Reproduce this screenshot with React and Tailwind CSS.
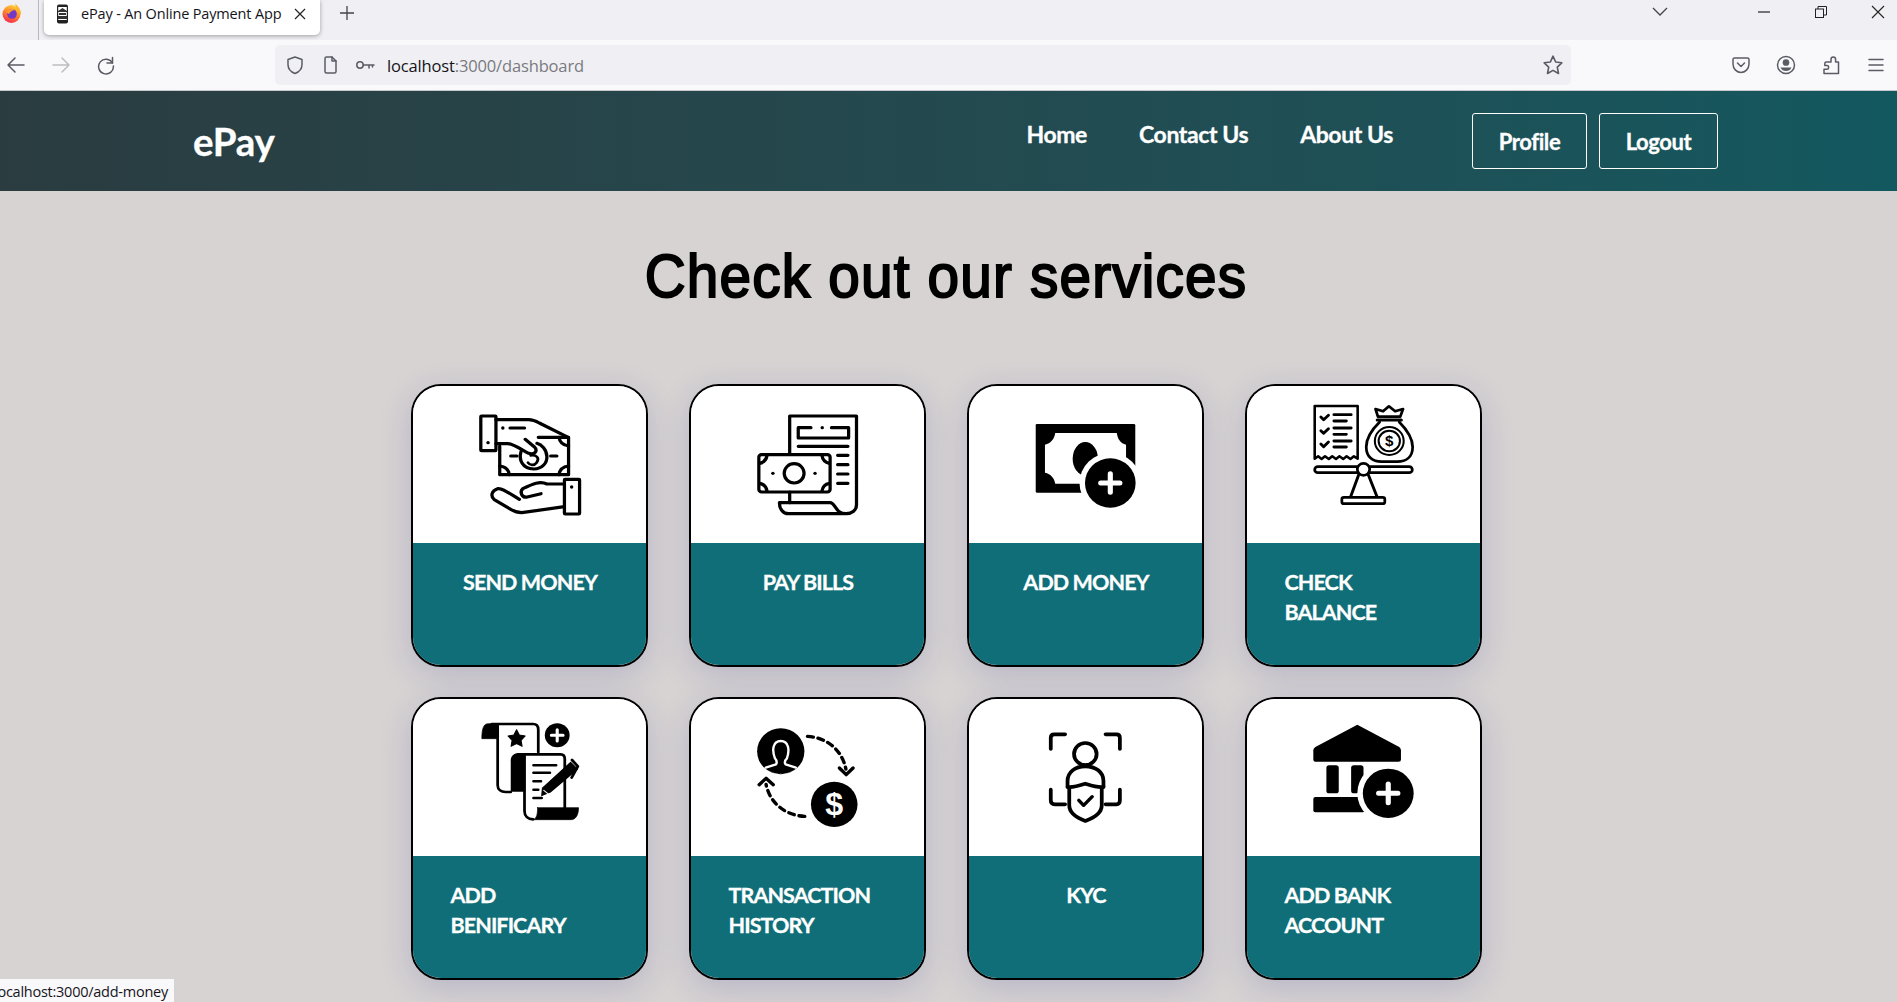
import React from "react";

const Ico = ({ vb, children, className = "" }) => (
  <svg viewBox={vb} preserveAspectRatio="none" className={"block w-full h-full " + className} fill="none" stroke="#000" strokeWidth="9.5" strokeLinecap="round" strokeLinejoin="round">
    {children}
  </svg>
);

const SendMoney = () => (
  <Ico vb="36 32 677 471">
    <rect x="233" y="122" width="44" height="104" rx="2" />
    <circle cx="254" cy="202" r="5" fill="#000" stroke="none" />
    <path d="M277 133H372C385 133 393 137 403 143L487 186" />
    <circle cx="297" cy="158" r="5" fill="#000" stroke="none" />
    <path d="M318 158H360" />
    <path d="M288 212V298H488V186H400" />
    <path d="M460 186C462 200 472 210 488 212M288 272C304 274 314 284 316 298M488 272C472 274 462 284 460 298" />
    <path d="M320 242H338M436 242H454" />
    <path d="M350 228C343 252 352 280 387 281C412 281 426 262 425 243C424 222 410 208 396 204" />
    <path d="M277 205H312C330 207 350 222 372 234C390 240 400 226 388 214L362 192" />
    <path d="M378 240C395 238 405 248 395 262C388 272 375 270 370 262" strokeWidth="8" />
    <rect x="476" y="312" width="44" height="104" rx="2" />
    <circle cx="497" cy="335" r="5" fill="#000" stroke="none" />
    <path d="M476 326H425C405 316 385 325 355 340C345 350 352 368 368 365L408 355" />
    <path d="M476 394L352 412C340 412 330 408 320 402L272 373C260 362 265 345 282 340C295 338 310 350 345 372" />
  </Ico>
);

const PayBills = () => (
  <Ico vb="842 32 680 471">
    <path d="M1130 236V122H1325V388C1325 405 1312 415 1295 415H1127C1110 415 1100 400 1100 382H1248C1264 382 1262 415 1295 415" />
    <path d="M1130 350V382" />
    <path d="M1192 157H1155V188H1302V157H1252M1155 213H1300" />
    <circle cx="1225" cy="157" r="5" fill="#000" stroke="none" />
    <path d="M1270 240H1300M1270 268H1300M1270 296H1300M1270 324H1300" />
    <rect x="1040" y="238" width="208" height="112" rx="8" />
    <circle cx="1143" cy="294" r="29" />
    <circle cx="1081" cy="294" r="5" fill="#000" stroke="none" />
    <circle cx="1204" cy="294" r="5" fill="#000" stroke="none" />
    <path d="M1064 240C1062 254 1054 262 1042 264M1224 240C1226 254 1234 262 1246 264M1064 348C1062 334 1054 326 1042 324M1224 348C1226 334 1234 326 1246 324" />
  </Ico>
);

const PlusBadge = ({ cx, cy, r, ring }) => (
  <>
    <circle cx={cx} cy={cy} r={ring} fill="#fff" stroke="none" />
    <circle cx={cx} cy={cy} r={r} fill="#000" stroke="none" />
    <path d={`M${cx - 28} ${cy}H${cx + 28}M${cx} ${cy - 28}V${cy + 28}`} stroke="#fff" strokeWidth="15" />
  </>
);

const AddMoney = () => (
  <Ico vb="52 32 681 471">
    <path d="M250 146H534Q538 146 538 150V348Q538 352 534 352H250Q247 352 247 348V150Q247 146 250 146Z" fill="#000" stroke="none" />
    <path d="M304 173H484C486 190 495 205 511 208V292C495 295 486 310 484 325H304C302 310 291 295 274 292V208C291 205 302 190 304 173Z" fill="#fff" stroke="none" />
    <ellipse cx="392" cy="250" rx="37" ry="50" fill="#000" stroke="none" />
    <PlusBadge cx={465} cy={323} r={74} ring={90} />
  </Ico>
);

const CheckBalance = () => (
  <Ico vb="859 32 678 471">
    <path d="M1056 250V92H1181V250L1170 243L1160 251L1149 243L1139 251L1128 243L1118 251L1107 243L1097 251L1086 243L1076 251L1066 243Z" strokeWidth="7.5" />
    <path d="M1074 125L1082 133L1096 120M1074 166L1082 174L1096 160M1074 206L1082 214L1096 200" strokeWidth="8.5" />
    <path d="M1112 118H1162M1112 137H1148M1112 158H1162M1112 177H1148M1112 197H1162M1112 215H1148" strokeWidth="8.5" />
    <path d="M1240 124L1233 101L1255 108L1272 93L1290 108L1313 101L1305 124Z" strokeWidth="8" />
    <path d="M1238 134H1308" strokeWidth="9" />
    <path d="M1245 140C1220 165 1206 190 1206 215C1206 245 1225 259 1250 259H1296C1322 259 1341 245 1341 215C1341 190 1326 165 1302 140" strokeWidth="8" />
    <circle cx="1273" cy="197" r="42" strokeWidth="6" />
    <circle cx="1273" cy="197" r="31" strokeWidth="6" />
    <text x="1273" y="213" textAnchor="middle" fontSize="44" fontWeight="700" fontFamily="Liberation Sans, sans-serif" fill="#000" stroke="none">$</text>
    <rect x="1056" y="274" width="284" height="18" rx="9" strokeWidth="8" />
    <path d="M1184 298L1160 366M1212 298L1238 366" strokeWidth="8.5" />
    <rect x="1135" y="366" width="125" height="19" rx="6" fill="#fff" strokeWidth="8" />
    <circle cx="1198" cy="282" r="18" fill="#fff" strokeWidth="8" />
  </Ico>
);

const AddBenificary = () => (
  <Ico vb="36 26 677 471">
    <path d="M282 100H255C242 100 236 112 236 145H282Z" fill="#000" stroke="#000" strokeWidth="2" />
    <path d="M265 101H385C395 101 400 108 400 118V186M282 105V285C282 298 292 305 305 305H320" strokeWidth="8" />
    <path d="M320 304V210C320 196 330 188 345 188H362V304Z" fill="#000" stroke="none" />
    <path d="M360 192H465C473 192 477 198 477 206V354M360 192V362C360 378 370 387 385 387" strokeWidth="8" />
    <path d="M398 352H517C517 375 508 388 495 388H385C396 385 398 370 398 352Z" fill="#000" stroke="#000" strokeWidth="2" />
    <path d="M386 225H452M386 247H434M386 273H408M386 298H400M386 323H410" strokeWidth="7.5" />
    <path d="M412 293L494 216L514 236L435 305L410 316Z" fill="#000" stroke="#000" strokeWidth="3" />
    <path d="M498 209L515 228M515 228L497 262" strokeWidth="8" />
    <path d="M416 300L428 310" stroke="#fff" strokeWidth="3" />
    <path d="M337 118L345 134L362 137L350 150L353 168L337 160L321 168L324 150L312 137L329 134Z" fill="#000" stroke="#000" strokeWidth="3" />
    <circle cx="455" cy="135" r="36" fill="#000" stroke="none" />
    <path d="M438 135H472M455 118V152" stroke="#fff" strokeWidth="9" />
  </Ico>
);

const TxHistory = () => (
  <Ico vb="842 26 680 471">
    <circle cx="1104" cy="183" r="69" fill="#000" stroke="none" />
    <path d="M1060 232L1090 222C1094 216 1092 210 1087 204C1078 180 1080 152 1104 152C1128 152 1130 180 1122 204C1116 210 1114 216 1118 222L1148 232" stroke="#fff" strokeWidth="7" />
    <path d="M1066 240Q1104 262 1142 240L1120 250H1088Z" fill="#fff" stroke="none" />
    <circle cx="1260" cy="342" r="68" fill="#000" stroke="none" />
    <text x="1260" y="374" textAnchor="middle" fontSize="94" fontFamily="Liberation Sans, sans-serif" fontWeight="700" fill="#fff" stroke="none">$</text>
    <path d="M1182 138C1240 142 1283 180 1294 236" strokeWidth="10" strokeDasharray="17 14" />
    <path d="M1275 233L1295 253L1315 233" strokeWidth="10" />
    <path d="M1174 378C1118 376 1072 338 1061 282" strokeWidth="10" strokeDasharray="17 14" />
    <path d="M1041 283L1061 264L1082 283" strokeWidth="10" />
  </Ico>
);

const Kyc = () => (
  <Ico vb="52 26 681 471">
    <g strokeWidth="11">
      <path d="M291 176V142Q291 132 301 132H333M451 132H483Q493 132 493 142V176M291 298V330Q291 342 303 342H333M451 342H483Q493 342 493 330V298" />
      <circle cx="392" cy="191" r="33" />
      <path d="M340 290V272C340 245 362 228 392 228C422 228 445 245 445 272V290" />
      <path d="M340 290C360 292 375 286 392 280C410 286 425 292 445 290" />
      <path d="M345 293V345C345 365 365 382 392 392C420 382 440 365 440 345V293" />
    </g>
    <path d="M373 330L387 345L412 319" strokeWidth="10" />
  </Ico>
);

const AddBank = () => (
  <Ico vb="859 26 678 471">
    <path d="M1180 103L1302 170Q1307 174 1307 180V208Q1307 214 1300 214H1058Q1052 214 1052 208V180Q1052 174 1058 170Z" fill="#000" stroke="none" />
    <rect x="1090" y="225" width="36" height="84" rx="8" fill="#000" stroke="none" />
    <rect x="1162" y="225" width="36" height="84" rx="8" fill="#000" stroke="none" />
    <rect x="1052" y="320" width="150" height="46" rx="6" fill="#000" stroke="none" />
    <PlusBadge cx={1270} cy={309} r={74} ring={90} />
  </Ico>
);

const cards = [
  ["SEND MONEY", SendMoney],
  ["PAY BILLS", PayBills],
  ["ADD MONEY", AddMoney],
  ["CHECK BALANCE", CheckBalance],
  ["ADD BENIFICARY", AddBenificary],
  ["TRANSACTION HISTORY", TxHistory],
  ["KYC", Kyc],
  ["ADD BANK ACCOUNT", AddBank],
];

const Tb = ({ children, className = "w-5 h-5", vb = "0 0 20 20" }) => (
  <svg viewBox={vb} className={"block shrink-0 " + className} fill="none" stroke="currentColor" strokeWidth="1.5" strokeLinecap="round" strokeLinejoin="round">
    {children}
  </svg>
);

function TabBar() {
  return (
    <div className="flex h-10 bg-[#f0eff4] items-start">
      <svg viewBox="0 0 20 20" className="block w-5 h-5 mt-[3px] ml-[2px] shrink-0">
        <defs>
          <linearGradient id="ff" x1="0.7" y1="0" x2="0.3" y2="1">
            <stop offset="0" stopColor="#ffd53a" />
            <stop offset="0.45" stopColor="#ff8a2a" />
            <stop offset="1" stopColor="#f5264e" />
          </linearGradient>
        </defs>
        <circle cx="9.5" cy="11" r="9" fill="url(#ff)" />
        <path d="M13 0.5C17 4 19.5 8 19 12L15 7Z" fill="#ffb52a" />
        <circle cx="10" cy="11" r="4.8" fill="#7139c4" />
        <path d="M4 9C7 6 11 5 14 7C10 7 8 9 7 11Z" fill="#ff9b2c" />
      </svg>
      <div className="w-px h-10 bg-[#b9b9bd] ml-[16px]" />
      <div className="ml-[5px] w-[276px] h-[35px] bg-white rounded-b-[5px] shadow-[0_1px_4px_rgba(0,0,0,0.35)] flex items-center pl-[12px] pr-[14px] pb-[7px]">
        <svg viewBox="0 0 15 20" className="block w-[15px] h-5 shrink-0 mr-[10px]">
          <rect x="1" y="0.5" width="11" height="19" rx="2" fill="#222" />
          <rect x="2.2" y="3" width="8.6" height="13" fill="#fff" />
          <path d="M6.5 4L11 7V8H2V7ZM3 9H10V11H3ZM2 12H11V15H2Z" fill="#333" />
        </svg>
        <span className="font-['Open_Sans',sans-serif] text-[14.5px] tracking-[-0.16px] text-[#15141a] whitespace-nowrap flex-1">ePay - An Online Payment App</span>
        <svg viewBox="0 0 12 12" className="block w-3 h-3 shrink-0" stroke="#222" strokeWidth="1.2"><path d="M1 1L11 11M11 1L1 11" /></svg>
      </div>
      <svg viewBox="0 0 16 16" className="block w-4 h-4 ml-[19px] mt-[5px] shrink-0" stroke="#444" strokeWidth="1.3"><path d="M8 1V15M1 8H15" /></svg>
      <div className="ml-auto flex items-center h-6 pr-[12px]">
        <svg viewBox="0 0 16 10" className="block w-4 h-[10px]" fill="none" stroke="#444" strokeWidth="1.3"><path d="M1 1L8 8L15 1" /></svg>
        <svg viewBox="0 0 12 2" className="block w-3 h-[2px] ml-[90px]" stroke="#222" strokeWidth="1.2"><path d="M0 1H12" /></svg>
        <svg viewBox="0 0 12 12" className="block w-3 h-3 ml-[45px]" fill="none" stroke="#222" strokeWidth="1"><rect x="0.5" y="3" width="8" height="8.5" /><path d="M3 3V0.5H11.5V9H8.5" /></svg>
        <svg viewBox="0 0 14 14" className="block w-[14px] h-[14px] ml-[44px]" stroke="#222" strokeWidth="1.1"><path d="M1 1L13 13M13 1L1 13" /></svg>
      </div>
    </div>
  );
}

function ToolBar() {
  return (
    <div className="flex h-[51px] bg-[#f9f9fb] items-center border-b border-[#c9c9cc] text-[#5b5b66]">
      <div className="w-[275px] shrink-0 flex items-center gap-[25px] pl-[6px]">
        <Tb><path d="M18 10H2M9 3L2 10L9 17" /></Tb>
        <Tb className="w-5 h-5 text-[#bdbdc2]"><path d="M2 10H18M11 3L18 10L11 17" /></Tb>
        <Tb><path d="M16.5 2.5V8H11" /><path d="M16.5 8A7.4 7.4 0 1 0 17.4 11" /></Tb>
      </div>
      <div className="w-[1296px] h-10 rounded-[5px] bg-[#f0f0f4] flex items-center pl-[10px] pr-[7px] shrink-0">
        <Tb><path d="M10 2L17 4.5V9.5C17 14 14 17 10 18.5C6 17 3 14 3 9.5V4.5Z" /></Tb>
        <Tb className="w-5 h-5 ml-[15px]"><path d="M5 3.5A1.5 1.5 0 0 1 6.5 2H12L16 6V16.5A1.5 1.5 0 0 1 14.5 18H6.5A1.5 1.5 0 0 1 5 16.5Z" /><path d="M12 2V6H16" /></Tb>
        <Tb className="w-5 h-5 ml-[15px]"><circle cx="5" cy="10" r="3.2" /><path d="M8.5 10H19M14 10V13M17.5 10V12" /></Tb>
        <span className="ml-[12px] pt-[2px] font-['Open_Sans',sans-serif] text-[16.5px] tracking-[-0.15px] text-[#7a7a80] whitespace-nowrap"><span className="text-[#15141a]">localhost</span>:3000/dashboard</span>
        <Tb className="ml-auto w-[22px] h-[22px]"><path d="M10 2L12.4 7.3L18 8L13.9 11.9L15 17.7L10 14.9L5 17.7L6.1 11.9L2 8L7.6 7.3Z" /></Tb>
      </div>
      <div className="flex items-center gap-[25px] pl-[160px]">
        <Tb><path d="M3.5 3H16.5A1.5 1.5 0 0 1 18 4.5V9C18 14 14 17.5 10 17.5C6 17.5 2 14 2 9V4.5A1.5 1.5 0 0 1 3.5 3Z" /><path d="M6.5 8L10 11.5L13.5 8" /></Tb>
        <Tb><circle cx="10" cy="10" r="8.5" /><circle cx="10" cy="7.5" r="2.6" fill="currentColor" /><path d="M4.5 12.5H15.5C14.5 15 12.5 16 10 16C7.5 16 5.5 15 4.5 12.5Z" fill="currentColor" stroke="none" /></Tb>
        <Tb><path d="M7.5 7H10V4.2A2.3 2.3 0 0 1 14.6 4.2V7H17.5V18.5H3V14.2H6C8.2 14.2 8.2 10.6 6 10.6H3.8V8.5C3.8 7.6 4.4 7 5.3 7Z" /></Tb>
        <Tb><path d="M3 4.5H17M3 10H17M3 15.5H17" /></Tb>
      </div>
    </div>
  );
}

function NavBar() {
  return (
    <nav className="h-[100px] flex items-center bg-linear-to-r from-[#2a3c40] to-[#13585f] pl-[193px] pr-[179px] font-['Lato',sans-serif] font-bold text-white [-webkit-text-stroke:0.3px_#fff]">
      <a className="text-[38.5px] leading-none tracking-[-0.3px]">ePay</a>
      <div className="ml-auto flex items-center gap-[52px] text-[23px] tracking-[-0.4px] pb-[13px]">
        <a>Home</a>
        <a>Contact Us</a>
        <a>About Us</a>
      </div>
      <div className="ml-[79px] flex items-center gap-3 text-[22px] tracking-[-0.4px]">
        <button className="w-[115px] h-[56px] border border-white rounded-[3px]">Profile</button>
        <button className="w-[119px] h-[56px] border border-white rounded-[3px]">Logout</button>
      </div>
    </nav>
  );
}

function Card({ title, Art }) {
  return (
    <a className="flex flex-col w-[237px] h-[283px] rounded-[30px] border-2 border-black overflow-hidden shadow-[0_8px_32px_rgba(31,38,135,0.17)]">
      <div className="h-[157px] bg-white shrink-0"><Art /></div>
      <div className="flex-1 bg-[#0f6e77] flex justify-center pl-[38px] pr-[36px] pt-[24px] font-['Lato',sans-serif] font-bold text-white text-[21.5px] leading-[30px] tracking-[-0.9px] [-webkit-text-stroke:0.3px_#fff]">
        <span className="block">{title}</span>
      </div>
    </a>
  );
}

export default function App() {
  return (
    <div className="relative w-[1897px] h-[1002px] overflow-hidden bg-[#d7d3d3]">
      <TabBar />
      <ToolBar />
      <NavBar />
      <main className="ml-[410.5px] w-[1071px]">
        <h1 className="pt-[50px] h-[193px] text-center font-['Liberation_Sans',sans-serif] text-[61px] leading-[70px] font-normal text-black tracking-[1.25px] [-webkit-text-stroke:2px_#000] whitespace-nowrap">
          <span className="inline-block scale-x-[0.93]">Check out our services</span>
        </h1>
        <div className="grid grid-cols-[repeat(4,237px)] gap-x-[41px] gap-y-[30px]">
          {cards.map(([t, A]) => <Card key={t} title={t} Art={A} />)}
        </div>
      </main>
      <div className="absolute left-0 bottom-0 w-[174px] h-[23px] overflow-hidden bg-[#f9f9fb] flex items-center pt-[3px]">
        <span className="-ml-[6px] font-['Open_Sans',sans-serif] text-[14.5px] tracking-[-0.25px] text-[#15141a] whitespace-nowrap">localhost:3000/add-money</span>
      </div>
    </div>
  );
}
